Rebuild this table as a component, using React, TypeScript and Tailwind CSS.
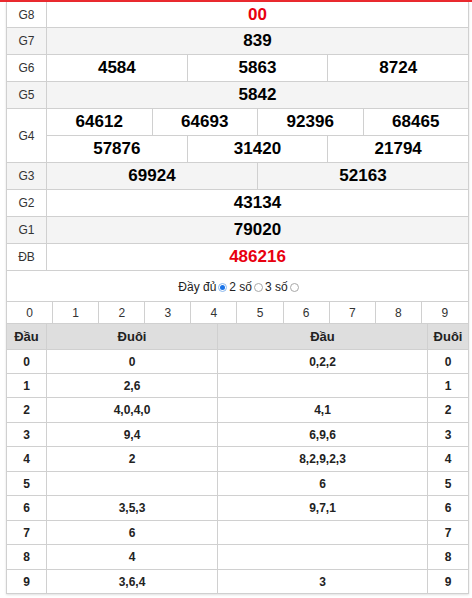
import React from "react";

const FONT = { fontFamily: '"Liberation Sans", Arial, sans-serif' };

const Label = ({ children }: { children: React.ReactNode }) => (
  <div className="w-[40px] shrink-0 border-r border-[#d0d0d0] flex items-center justify-center text-[12px] text-[#333]">
    {children}
  </div>
);

const Cell = ({ children, red = false, last = false }: { children: React.ReactNode; red?: boolean; last?: boolean }) => (
  <div
    className={`flex-1 basis-0 flex items-center justify-center text-[17px] font-bold ${red ? "text-[#e8000f]" : "text-black"} ${last ? "" : "border-r border-[#d0d0d0]"}`}
  >
    {children}
  </div>
);

const Row = ({
  label,
  values,
  bg = false,
  red = false,
  first = false,
}: {
  label: string;
  values: string[];
  bg?: boolean;
  red?: boolean;
  first?: boolean;
}) => (
  <div className={`flex ${first ? "h-[26px]" : "h-[27px]"} border-b border-[#d0d0d0] ${bg ? "bg-[#f4f4f4]" : "bg-white"}`}>
    <Label>{label}</Label>
    <div className="flex flex-1">
      {values.map((v, i) => (
        <Cell key={i} red={red} last={i === values.length - 1}>
          {v}
        </Cell>
      ))}
    </div>
  </div>
);

const loto: [string, string, string, string, string][] = [
  ["0", "0", "0,2,2", "0", "h-[24px]"],
  ["1", "2,6", "", "1", "h-[24px]"],
  ["2", "4,0,4,0", "4,1", "2", "h-[25px]"],
  ["3", "9,4", "6,9,6", "3", "h-[24px]"],
  ["4", "2", "8,2,9,2,3", "4", "h-[25px]"],
  ["5", "", "6", "5", "h-[24px]"],
  ["6", "3,5,3", "9,7,1", "6", "h-[25px]"],
  ["7", "6", "", "7", "h-[24px]"],
  ["8", "4", "", "8", "h-[25px]"],
  ["9", "3,6,4", "3", "9", "h-[24px]"],
];

const Radio = ({ checked }: { checked?: boolean }) =>
  checked ? (
    <span className="inline-flex w-[9px] h-[9px] rounded-full border border-[#8ab8ee] bg-white items-center justify-center mx-[2px]">
      <span className="w-[5px] h-[5px] rounded-full bg-[#1a73e8]" />
    </span>
  ) : (
    <span className="inline-block w-[9px] h-[9px] rounded-full border border-[#a8a8a8] bg-white mx-[2px]" />
  );

export default function App() {
  return (
    <div className="w-[472px] h-[598px] bg-white overflow-hidden" style={FONT}>
      <div className="h-[2px] bg-[#ea2a2f]" />
      <div className="ml-[6px] w-[463px] border-l border-r border-[#d0d0d0] shadow-[0_1px_2px_rgba(0,0,0,0.12)]">
        <Row label="G8" values={["00"]} red first />
        <Row label="G7" values={["839"]} bg />
        <Row label="G6" values={["4584", "5863", "8724"]} />
        <Row label="G5" values={["5842"]} bg />
        <div className="flex border-b border-[#d0d0d0] bg-white">
          <Label>G4</Label>
          <div className="flex flex-col flex-1">
            <div className="flex h-[27px] border-b border-[#d0d0d0]">
              {["64612", "64693", "92396", "68465"].map((v, i) => (
                <Cell key={i} last={i === 3}>
                  {v}
                </Cell>
              ))}
            </div>
            <div className="flex h-[26px]">
              {["57876", "31420", "21794"].map((v, i) => (
                <Cell key={i} last={i === 2}>
                  {v}
                </Cell>
              ))}
            </div>
          </div>
        </div>
        <Row label="G3" values={["69924", "52163"]} bg />
        <Row label="G2" values={["43134"]} />
        <Row label="G1" values={["79020"]} bg />
        <Row label="ĐB" values={["486216"]} red />

        <div className="h-[30px] flex items-center justify-center text-[12px] text-[#222] pt-[2px] pl-[4px]">
          <span>Đầy đủ</span>
          <Radio checked />
          <span>2 số</span>
          <Radio />
          <span>3 số</span>
          <Radio />
        </div>

        <div className="grid grid-cols-10 h-[23px] border-t border-b border-[#d0d0d0]">
          {Array.from({ length: 10 }, (_, i) => (
            <div
              key={i}
              className={`flex items-center justify-center text-[12px] text-[#333] ${i < 9 ? "border-r border-[#d0d0d0]" : ""}`}
            >
              {i}
            </div>
          ))}
        </div>

        <div className="grid grid-cols-[40px_171px_1fr_40px] h-[26px] bg-[#dedede] border-b border-[#d0d0d0] text-[13px] font-bold text-[#222]">
          <div className="flex items-center justify-center border-r border-[#d0d0d0]">Đầu</div>
          <div className="flex items-center justify-center border-r border-[#d0d0d0]">Đuôi</div>
          <div className="flex items-center justify-center border-r border-[#d0d0d0]">Đầu</div>
          <div className="flex items-center justify-center">Đuôi</div>
        </div>

        {loto.map(([a, b, c, d, h], i) => (
          <div
            key={i}
            className={`grid grid-cols-[40px_171px_1fr_40px] ${h} border-b border-[#d0d0d0] text-[12px] font-bold text-[#222]`}
          >
            <div className="flex items-center justify-center border-r border-[#d0d0d0]">{a}</div>
            <div className="flex items-center justify-center border-r border-[#d0d0d0]">{b}</div>
            <div className="flex items-center justify-center border-r border-[#d0d0d0]">{c}</div>
            <div className="flex items-center justify-center">{d}</div>
          </div>
        ))}
      </div>
    </div>
  );
}
